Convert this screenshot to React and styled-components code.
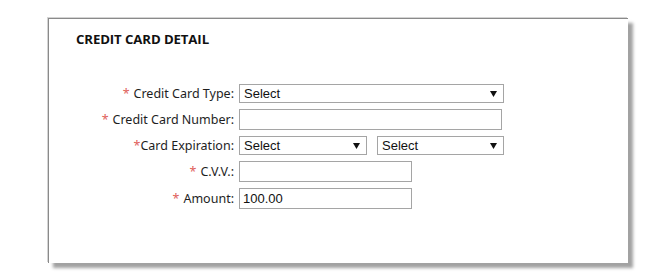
import React from "react"
import styled, { createGlobalStyle } from "styled-components"

const GlobalStyle = createGlobalStyle`
  body {
    margin: 0;
    background: #ffffff;
    font-family: "Noto Sans", "Open Sans", sans-serif;
  }
`

const Page = styled.div`
  padding: 18px 0 12px 48px;
`

const Card = styled.section`
  box-sizing: border-box;
  width: 580px;
  height: 245px;
  background: #fff;
  border-top: 1px solid #8a8a8a;
  border-left: 1px solid #8a8a8a;
  box-shadow: 5px 5px 3px #a2a2a2, -1px -1px 0 #d4d4d4;
  padding: 11px 0 0 27px;
`

const Title = styled.h2`
  margin: 0;
  font-family: "Open Sans", sans-serif;
  font-size: 13.2px;
  font-weight: 700;
  letter-spacing: -0.1px;
  line-height: 18px;
  color: #111;
`

const Form = styled.div`
  display: grid;
  grid-template-columns: 158px auto;
  column-gap: 5px;
  row-gap: 6px;
  margin-top: 36px;
  align-items: center;
`

const Label = styled.label`
  text-align: right;
  font-size: 12.5px;
  color: #1e1e1e;
  white-space: nowrap;
`

const Star = styled.span`
  color: #e0605a;
  margin-right: ${(p) => (p.$tight ? "0" : "4px")};
`

const Field = styled.div`
  display: flex;
  gap: 10px;
`

const Input = styled.input`
  box-sizing: border-box;
  width: ${(p) => p.$w}px;
  height: 21px;
  border: 1px solid #a5a5a5;
  padding: 0 3px;
  font-family: "Liberation Sans", Arial, sans-serif;
  font-size: 13px;
  color: #111;
  outline: none;
`

const SelectBox = styled.div`
  box-sizing: border-box;
  width: ${(p) => p.$w}px;
  height: 19px;
  border: 1px solid #a5a5a5;
  display: flex;
  align-items: center;
  justify-content: space-between;
  padding: 0 6px 0 4px;
  font-family: "Liberation Sans", Arial, sans-serif;
  font-size: 13px;
  color: #111;
`

const Arrow = () => (
  <svg width="7" height="6" viewBox="0 0 7 6">
    <path d="M0 0 H7 L3.5 6 Z" fill="#111" />
  </svg>
)

const Select = ({ w }) => (
  <SelectBox $w={w}>
    <span>Select</span>
    <Arrow />
  </SelectBox>
)

const App = () => {
  return (
    <Page>
      <GlobalStyle />
      <Card>
        <Title>CREDIT CARD DETAIL</Title>
        <Form>
          <Label>
            <Star>*</Star>Credit Card Type:
          </Label>
          <Field>
            <Select w={265} />
          </Field>

          <Label>
            <Star>*</Star>Credit Card Number:
          </Label>
          <Field>
            <Input $w={263} />
          </Field>

          <Label>
            <Star $tight>*</Star>Card Expiration:
          </Label>
          <Field>
            <Select w={128} />
            <Select w={127} />
          </Field>

          <Label>
            <Star>*</Star>C.V.V.:
          </Label>
          <Field>
            <Input $w={173} />
          </Field>

          <Label>
            <Star>*</Star>Amount:
          </Label>
          <Field>
            <Input $w={173} defaultValue="100.00" />
          </Field>
        </Form>
      </Card>
    </Page>
  )
}

export default App
